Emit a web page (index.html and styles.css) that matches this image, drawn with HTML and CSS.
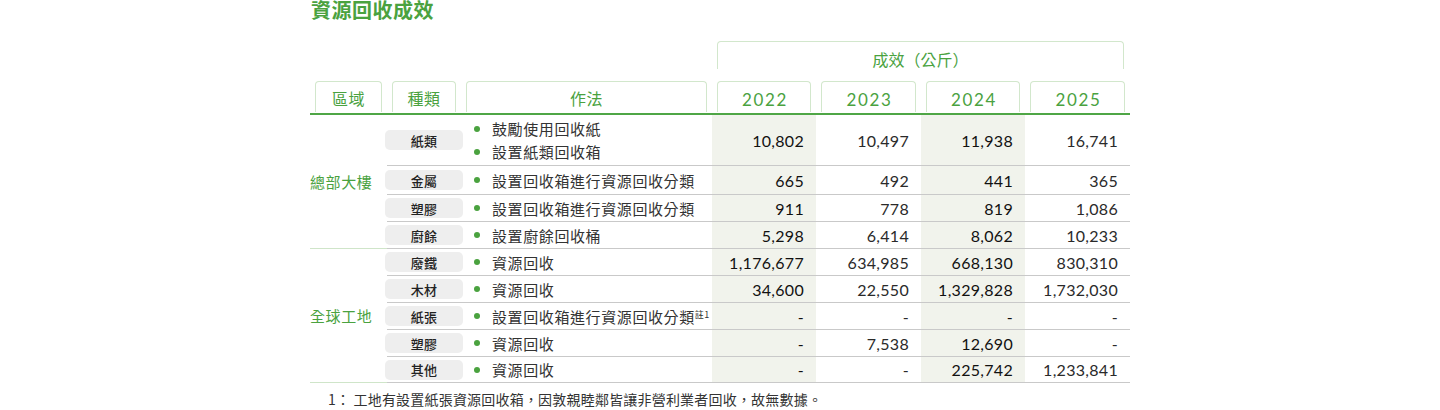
FILE: index.html
```html
<!DOCTYPE html>
<html lang="zh-Hant">
<head>
<meta charset="utf-8">
<title>資源回收成效</title>
<link rel="stylesheet" href="styles.css">
</head>
<body>
<div class="wrap">
  <h2 class="title">資源回收成效</h2>

  <div class="head">
    <div class="tab tab-group">成效（公斤）</div>
    <div class="hcell"><div class="tab">區域</div></div>
    <div class="hcell"><div class="tab">種類</div></div>
    <div class="hcell"><div class="tab">作法</div></div>
    <div class="hcell"><div class="tab year">2022</div></div>
    <div class="hcell"><div class="tab year">2023</div></div>
    <div class="hcell"><div class="tab year">2024</div></div>
    <div class="hcell"><div class="tab year">2025</div></div>
  </div>

  <div class="group">
    <div class="region">總部大樓</div>
    <div class="rows">
      <div class="row h51">
        <div class="c-type"><span class="pill">紙類</span></div>
        <div class="c-method"><ul class="list"><li><span>鼓勵使用回收紙</span></li><li><span>設置紙類回收箱</span></li></ul></div>
        <div class="num shade">10,802</div>
        <div class="num">10,497</div>
        <div class="num shade">11,938</div>
        <div class="num">16,741</div>
      </div>
      <div class="row h29">
        <div class="c-type"><span class="pill">金屬</span></div>
        <div class="c-method"><ul class="list"><li><span>設置回收箱進行資源回收分類</span></li></ul></div>
        <div class="num shade">665</div>
        <div class="num">492</div>
        <div class="num shade">441</div>
        <div class="num">365</div>
      </div>
      <div class="row">
        <div class="c-type"><span class="pill">塑膠</span></div>
        <div class="c-method"><ul class="list"><li><span>設置回收箱進行資源回收分類</span></li></ul></div>
        <div class="num shade">911</div>
        <div class="num">778</div>
        <div class="num shade">819</div>
        <div class="num">1,086</div>
      </div>
      <div class="row">
        <div class="c-type"><span class="pill">廚餘</span></div>
        <div class="c-method"><ul class="list"><li><span>設置廚餘回收桶</span></li></ul></div>
        <div class="num shade">5,298</div>
        <div class="num">6,414</div>
        <div class="num shade">8,062</div>
        <div class="num">10,233</div>
      </div>
    </div>
  </div>

  <div class="group">
    <div class="region">全球工地</div>
    <div class="rows">
      <div class="row">
        <div class="c-type"><span class="pill">廢鐵</span></div>
        <div class="c-method"><ul class="list"><li><span>資源回收</span></li></ul></div>
        <div class="num shade">1,176,677</div>
        <div class="num">634,985</div>
        <div class="num shade">668,130</div>
        <div class="num">830,310</div>
      </div>
      <div class="row">
        <div class="c-type"><span class="pill">木材</span></div>
        <div class="c-method"><ul class="list"><li><span>資源回收</span></li></ul></div>
        <div class="num shade">34,600</div>
        <div class="num">22,550</div>
        <div class="num shade">1,329,828</div>
        <div class="num">1,732,030</div>
      </div>
      <div class="row">
        <div class="c-type"><span class="pill">紙張</span></div>
        <div class="c-method"><ul class="list"><li><span>設置回收箱進行資源回收分類<sup class="note">註1</sup></span></li></ul></div>
        <div class="num shade">-</div>
        <div class="num">-</div>
        <div class="num shade">-</div>
        <div class="num">-</div>
      </div>
      <div class="row">
        <div class="c-type"><span class="pill">塑膠</span></div>
        <div class="c-method"><ul class="list"><li><span>資源回收</span></li></ul></div>
        <div class="num shade">-</div>
        <div class="num">7,538</div>
        <div class="num shade">12,690</div>
        <div class="num">-</div>
      </div>
      <div class="row h26">
        <div class="c-type"><span class="pill">其他</span></div>
        <div class="c-method"><ul class="list"><li><span>資源回收</span></li></ul></div>
        <div class="num shade">-</div>
        <div class="num">-</div>
        <div class="num shade">225,742</div>
        <div class="num">1,233,841</div>
      </div>
    </div>
  </div>

  <p class="footnote">1：&nbsp;工地有設置紙張資源回收箱，因敦親睦鄰皆讓非營利業者回收，故無數據。</p>
</div>
</body>
</html>
```
FILE: styles.css
```css
* { box-sizing: border-box; }

html, body {
  margin: 0;
  padding: 0;
  background: #ffffff;
}

body {
  font-family: "Noto Sans CJK TC", "Noto Sans", sans-serif;
  color: #333333;
}

.wrap {
  width: 820px;
  margin: 0 auto;
}

.title {
  margin: 0 0 0 1px;
  font-size: 20px;
  line-height: 20px;
  font-weight: 700;
  letter-spacing: 0.5px;
  color: #4aa23f;
}

/* ---------- header ---------- */
.head {
  display: grid;
  grid-template-columns: 77px 74px 251px 104px 105px 104px 105px;
  grid-template-rows: 28px 31px;
  row-gap: 12px;
  margin-top: 21px;
  padding-bottom: 1px;
  border-bottom: 2px solid #4fa646;
}

.hcell {
  padding: 0 5px;
  grid-row: 2;
}

.tab {
  height: 100%;
  border: 1px solid #d2e7cc;
  border-bottom: 0;
  border-radius: 4px 4px 0 0;
  display: flex;
  align-items: center;
  justify-content: center;
  padding-top: 2px;
  font-size: 16px;
  color: #4aa23f;
  letter-spacing: 0.5px;
}

.tab-group {
  grid-row: 1;
  grid-column: 4 / 8;
  margin: 0 6px 0 5px;
  padding-top: 6px;
  letter-spacing: 0;
}

.year {
  font-family: "Lato", "Noto Sans", sans-serif;
  font-size: 17px;
  letter-spacing: 1.6px;
  padding-left: 2px;
  padding-top: 4px;
}

/* ---------- body ---------- */
.group {
  display: grid;
  grid-template-columns: 77px 1fr;
}

.region {
  display: flex;
  align-items: center;
  border-bottom: 1px solid #cfe5c9;
  font-size: 15px;
  letter-spacing: 0.6px;
  color: #4aa23f;
}

.rows {
  display: flex;
  flex-direction: column;
}

.row {
  display: grid;
  grid-template-columns: 74px 251px 104px 105px 104px 105px;
  height: 27px;
  border-bottom: 1px solid #c9c9c9;
}

.row.h51 { height: 51px; }
.row.h29 { height: 29px; }
.row.h26 { height: 26px; }

.c-type {
  display: flex;
  align-items: center;
  justify-content: center;
}

.pill {
  display: flex;
  align-items: center;
  justify-content: center;
  width: 78px;
  height: 20px;
  margin: 0 -2px;
  border-radius: 5px;
  background: #eeeeee;
  font-size: 13px;
  font-weight: 500;
  color: #222222;
  letter-spacing: 0.3px;
}

.c-method {
  display: flex;
  align-items: center;
  padding-left: 13px;
}

.list {
  list-style: none;
  margin: 0;
  padding: 0;
}

.list li {
  display: flex;
  align-items: center;
  gap: 12px;
  font-size: 15px;
  line-height: 23px;
  letter-spacing: 0.6px;
  color: #333333;
  white-space: nowrap;
}

.list li::before {
  content: "";
  flex: 0 0 6px;
  width: 6px;
  height: 6px;
  border-radius: 50%;
  background: #4aa23f;
}

.note {
  font-size: 9px;
  line-height: 0;
  vertical-align: 5px;
  letter-spacing: 0.5px;
  margin-left: 0;
}

.num {
  display: flex;
  align-items: center;
  justify-content: flex-end;
  padding-right: 12px;
  font-family: "Lato", "Noto Sans", sans-serif;
  font-size: 16px;
  letter-spacing: 0.3px;
  color: #2a2a2a;
}

.num.shade {
  background: #f1f3ec;
  color: #111111;
}

.footnote {
  margin: 6px 0 0 0;
  padding-left: 18px;
  font-size: 14px;
  line-height: 20px;
  letter-spacing: 0.2px;
  color: #333333;
}
```
